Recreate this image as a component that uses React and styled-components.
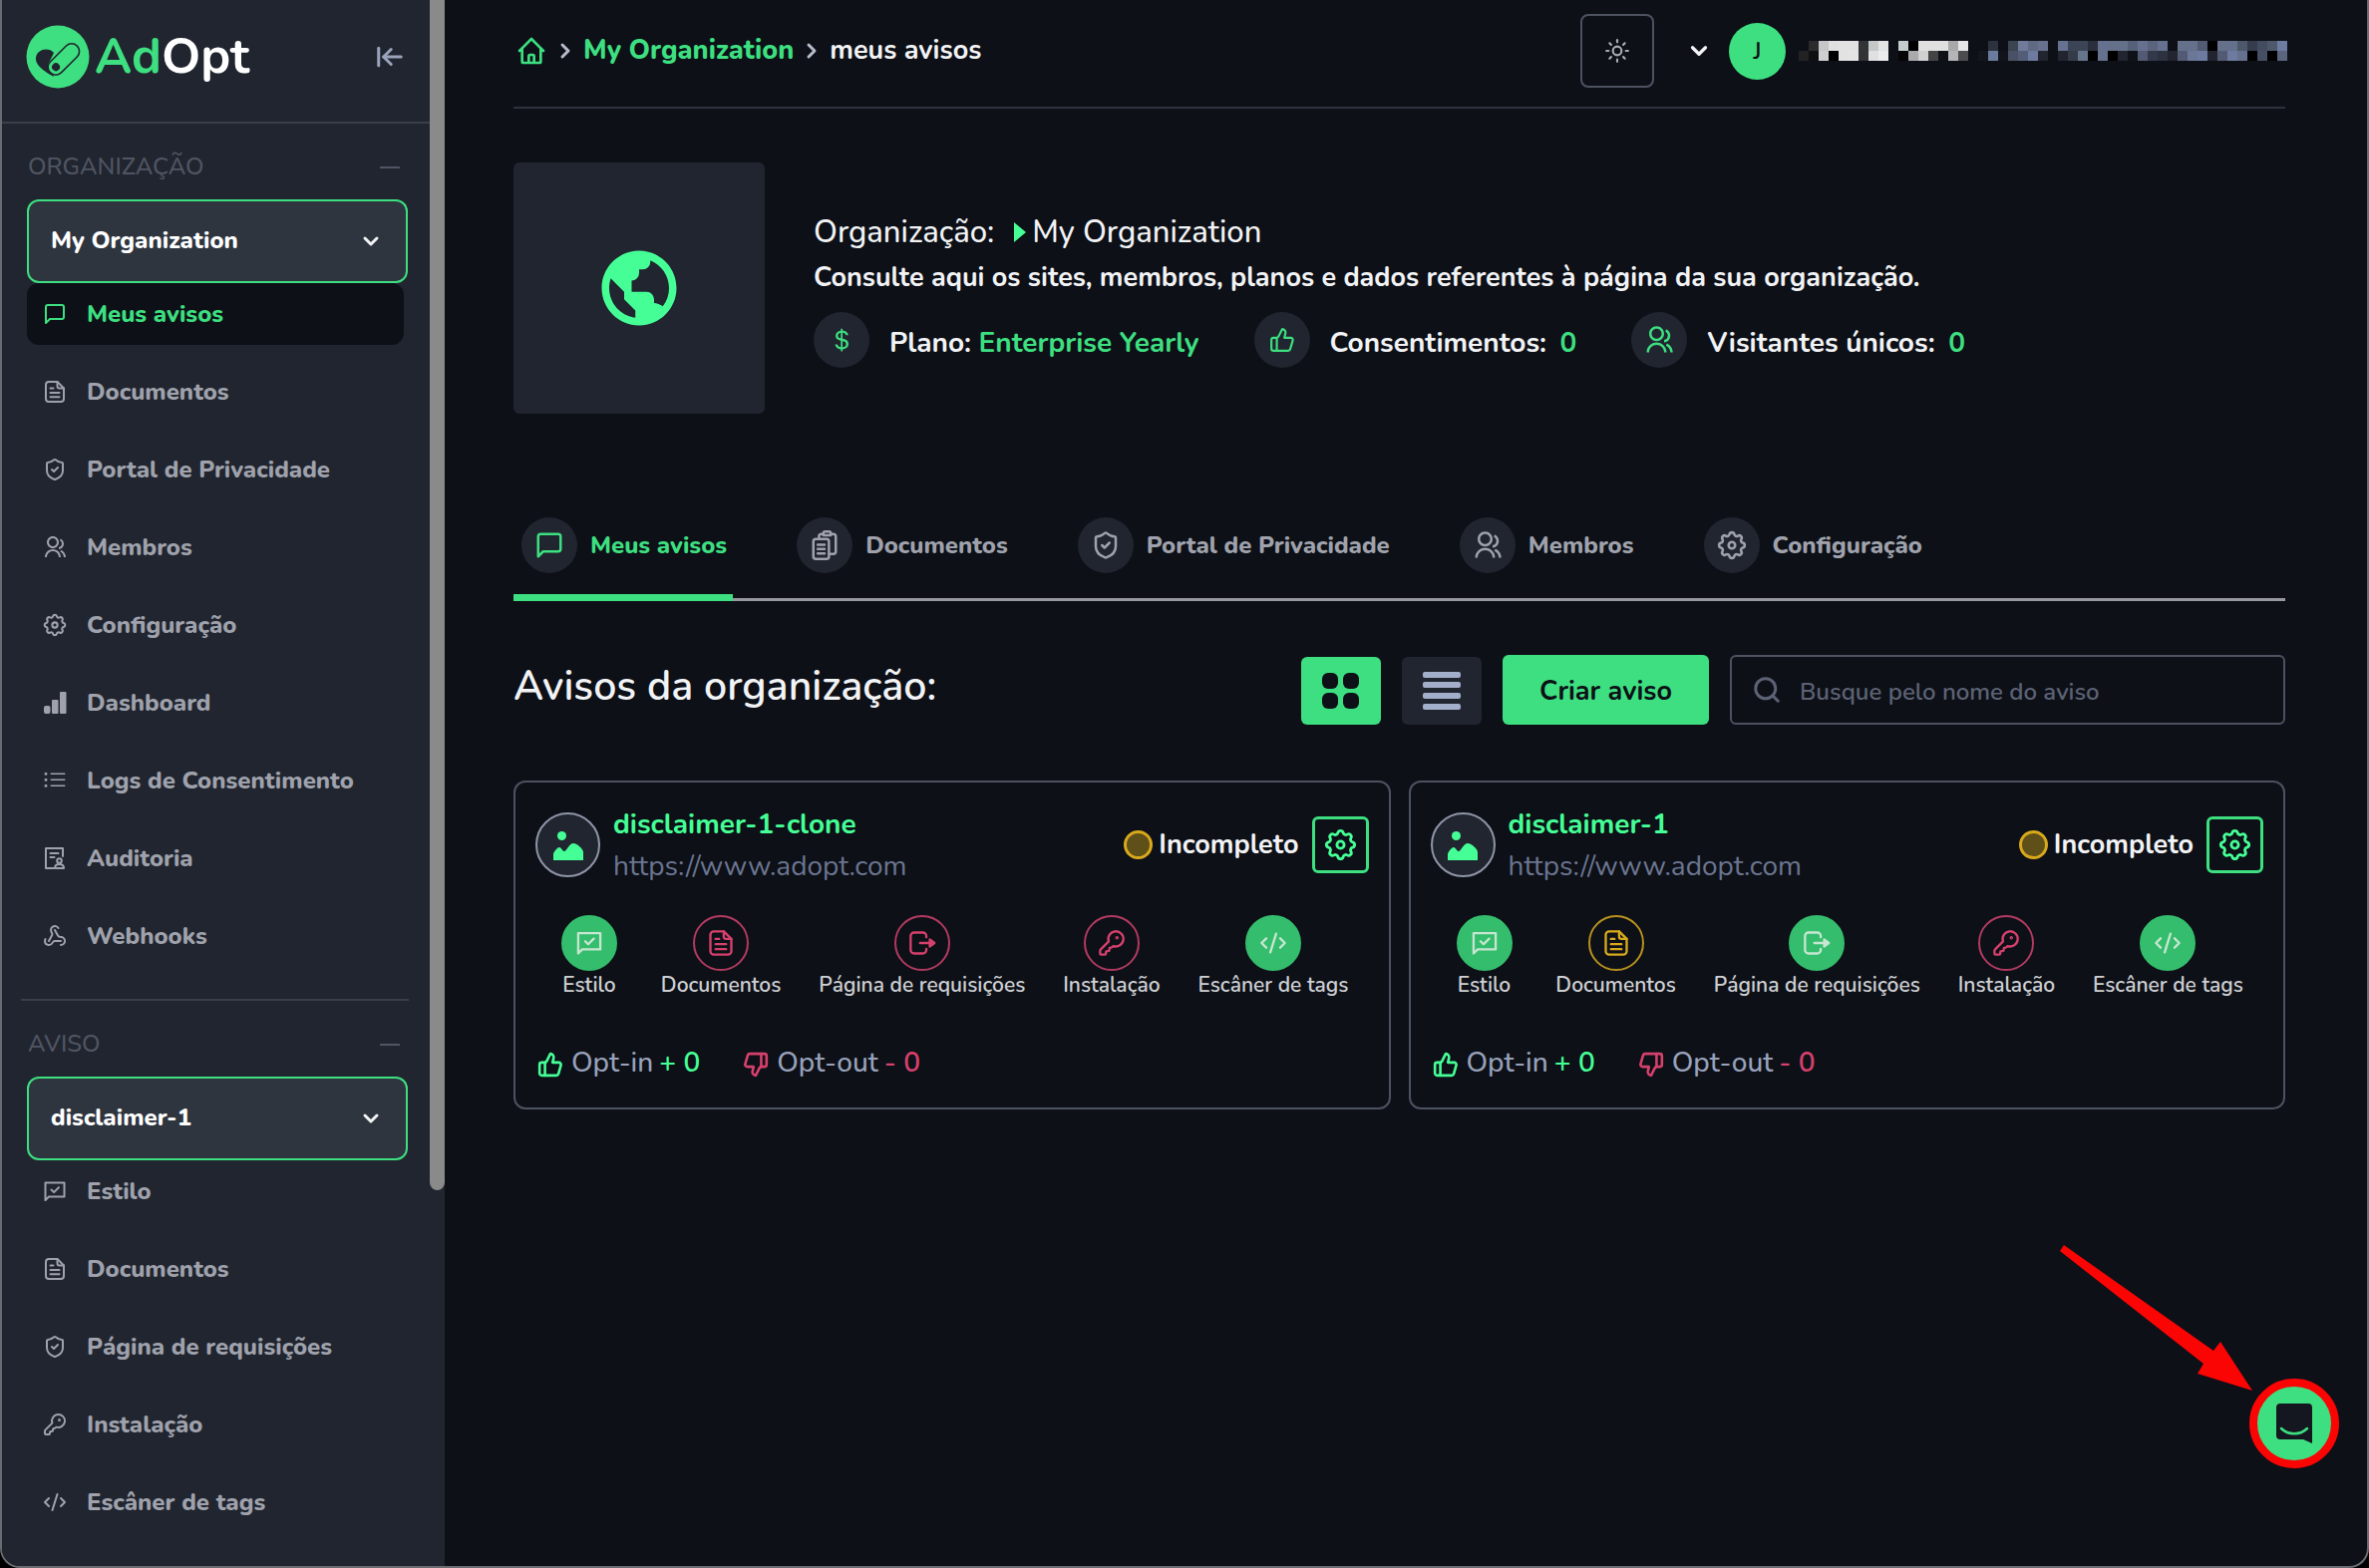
import React from 'react';
import styled, { createGlobalStyle, css } from 'styled-components';
import {
  LuArrowLeftToLine, LuChevronDown, LuChevronRight, LuCodeXml, LuKeyRound, LuSearch,
  LuShieldCheck, LuSun, LuThumbsDown, LuThumbsUp, LuWebhook,
} from 'react-icons/lu';
import { FiMessageSquare } from 'react-icons/fi';
import { HiOutlineHome } from 'react-icons/hi';
import { RiGroupLine } from 'react-icons/ri';
import { BsCurrencyDollar, BsListUl } from 'react-icons/bs';
import { BiWorld } from 'react-icons/bi';

const color = {
  page: '#0d1017',
  panel: '#21252f',
  field: '#2e353f',
  line: '#3a3f4b',
  outline: '#4d5260',
  muted: '#9fa2ac',
  faint: '#4f5563',
  slate: '#6b7590',
  text: '#f2f3f5',
  green: '#3ddf80',
  mint: '#45ff96',
  leaf: '#34bd6d',
  rose: '#d6406c',
  amber: '#d9a91c',
};

const GlobalStyle = createGlobalStyle`
  *, *::before, *::after { box-sizing: border-box; }
  body {
    margin: 0;
    background: #000;
    color: ${color.text};
    font-family: Nunito, "Nunito Sans", "Open Sans", "Noto Sans", sans-serif;
    font-size: 24px;
    line-height: 32px;
  }
  button, select, input { font: inherit; color: inherit; }
  button { cursor: pointer; }
  a { color: inherit; text-decoration: none; }
  h1, h2, h3, p, ul { margin: 0; padding: 0; font-weight: inherit; font-size: inherit; }
  ul { list-style: none; }
  svg { display: block; flex: none; }
`;

/* ---------- icons ---------- */

const Svg = ({ size = 24, width = 2, children, ...rest }) => (
  <svg width={size} height={size} viewBox="0 0 24 24" fill="none" stroke="currentColor"
    strokeWidth={width} strokeLinecap="round" strokeLinejoin="round" aria-hidden="true" {...rest}>
    {children}
  </svg>
);

const MessageCheck = (p) => (
  <Svg {...p}>
    <path d="M2.5 21V3.5h19v14H6z" />
    <path d="M8.5 10.5l2.6 2.6 4.8-4.8" />
  </Svg>
);

const DocumentText = (p) => (
  <Svg {...p}>
    <path d="M14.5 2H6a3 3 0 0 0-3 3v14a3 3 0 0 0 3 3h12a3 3 0 0 0 3-3V8.500z" />
    <path d="M14.500 2v4.500a2 2 0 0 0 2 2H21" />
    <path d="M7.500 8.500h3M7.500 13h9M7.500 17.300h9" />
  </Svg>
);

const ClipboardStack = (p) => (
  <Svg {...p}>
    <path d="M7.500 6V5a2 2 0 0 1 2-2H11M17 3h2a2 2 0 0 1 2 2v12a2 2 0 0 1-2 2h-3" />
    <path d="M11 4V2.500a1.500 1.500 0 0 1 1.500-1.500h3A1.500 1.500 0 0 1 17 2.500V4z" />
    <rect x="3" y="7" width="12.500" height="16" rx="2" />
    <path d="M6.500 11.500h5.500M6.500 15h5.500M6.500 18.500h5.500" />
  </Svg>
);

const Gear = (p) => (
  <Svg {...p} viewBox="1.5 1.5 21 21" strokeWidth="1.8">
    <path d="M10.325 4.317c.426-1.756 2.924-1.756 3.350 0a1.724 1.724 0 0 0 2.573 1.066c1.543-.94 3.310.826 2.370 2.370a1.724 1.724 0 0 0 1.065 2.572c1.756.426 1.756 2.924 0 3.350a1.724 1.724 0 0 0-1.066 2.573c.94 1.543-.826 3.310-2.370 2.370a1.724 1.724 0 0 0-2.572 1.065c-.426 1.756-2.924 1.756-3.350 0a1.724 1.724 0 0 0-2.573-1.066c-1.543.94-3.310-.826-2.370-2.370a1.724 1.724 0 0 0-1.065-2.572c-1.756-.426-1.756-2.924 0-3.350a1.724 1.724 0 0 0 1.066-2.573c-.94-1.543.826-3.310 2.370-2.370 1 .608 2.296.070 2.572-1.065z" />
    <circle cx="12" cy="12" r="2.300" />
  </Svg>
);

const Bars = (p) => (
  <Svg {...p} fill="currentColor" stroke="none">
    <rect x="1" y="15" width="6.500" height="8" rx="2" />
    <rect x="9" y="9" width="6.500" height="14" rx="1" />
    <rect x="17" y="1" width="6.500" height="22" rx="1" />
  </Svg>
);

const Audit = (p) => (
  <Svg {...p}>
    <path d="M20 10V2H3v20h8" />
    <path d="M7.500 7h8M7.500 11h4" />
    <circle cx="16.500" cy="14.500" r="2.300" />
    <path d="M12 22c0-2.600 1.800-4 4.500-4s4.500 1.400 4.500 4z" />
  </Svg>
);

const ExitBox = (p) => (
  <Svg {...p}>
    <path d="M15.500 7V6a3 3 0 0 0-3-3H5a3 3 0 0 0-3 3v12a3 3 0 0 0 3 3h7.500a3 3 0 0 0 3-3v-1" />
    <path d="M10 12h9" />
    <path d="M18.500 9l4 3-4 3z" fill="currentColor" />
  </Svg>
);

const Picture = () => (
  <svg width="30" height="30" viewBox="0 0 30 30" fill={color.mint} aria-hidden="true">
    <circle cx="8.500" cy="5.500" r="4.500" />
    <path d="M0 30v-6c0-2 4-7 6-7s3 4 5 4 5-8 9-8 10 6 10 9v8z" />
  </svg>
);

const TilesIcon = () => (
  <svg width="38" height="38" viewBox="0 0 38 38" fill={color.page} aria-hidden="true">
    <rect x="0" y="1" width="16" height="16" rx="6" />
    <rect x="21" y="1" width="16" height="16" rx="6" />
    <rect x="0" y="21" width="16" height="16" rx="6" />
    <rect x="21" y="21" width="16" height="16" rx="6" />
  </svg>
);

const RowsIcon = () => (
  <svg width="38" height="40" viewBox="0 0 38 40" fill="#a3aeca" aria-hidden="true">
    <rect x="0" y="1" width="38" height="6" rx="2" />
    <rect x="0" y="11" width="38" height="6" rx="2" />
    <rect x="0" y="22" width="38" height="6" rx="2" />
    <rect x="0" y="33" width="38" height="6" rx="2" />
  </svg>
);

const LogoMark = () => (
  <svg width="64" height="64" viewBox="0 0 64 64" aria-hidden="true">
    <circle cx="32" cy="32" r="31.500" fill={color.green} />
    <path d="M28 28c-5-6-17-4-18 5-1 8 11 15 18 19l-6-12z" fill={color.panel} />
    <g transform="rotate(-45 37 35)">
      <rect x="19" y="27.500" width="38" height="15.500" rx="7.700" fill={color.green} stroke={color.panel} strokeWidth="1.600" />
      <circle cx="27" cy="35.200" r="4" fill={color.panel} />
    </g>
  </svg>
);

const ChatBubble = () => (
  <svg width="38" height="42" viewBox="0 0 38 42" aria-hidden="true">
    <path d="M5 1h28a4 4 0 0 1 4 4v36l-9-4H5a4 4 0 0 1-4-4V5a4 4 0 0 1 4-4z" fill="#14171f" />
    <path d="M6 26c7 7 19 7 26 0" fill="none" stroke={color.green} strokeWidth="2.500" strokeLinecap="round" />
  </svg>
);

/* ---------- shell ---------- */

const Frame = styled.div`
  position: relative;
  display: flex;
  min-height: 100vh;
  overflow: hidden;
  background: ${color.page};
  border: 2px solid #6a6c72;
  border-top: 0;
  border-radius: 0 0 20px 20px;
`;

const Sidebar = styled.aside`
  display: flex;
  flex: none;
  width: 444px;
  background: ${color.panel};
`;

const SidebarBody = styled.div`
  flex: 1;
  min-width: 0;
`;

const ScrollThumb = styled.div`
  width: 15px;
  height: 76%;
  background: #8a8a8a;
  border-radius: 0 0 8px 8px;
`;

const Brand = styled.header`
  display: flex;
  align-items: center;
  justify-content: space-between;
  height: 124px;
  padding: 0 25px 8px 24px;
  border-bottom: 2px solid ${color.line};
`;

const BrandLink = styled.a`
  display: flex;
  align-items: center;
  gap: 5px;
  font-size: 50px;
  line-height: 56px;
  font-weight: 700;
  color: #fff;
`;

const BrandAccent = styled.span`
  color: ${color.green};
`;

const PlainButton = styled.button`
  display: flex;
  padding: 0;
  border: 0;
  background: none;
  color: ${(p) => p.$tone || 'inherit'};
`;

const NavSection = styled.section`
  padding: 28px 22px 0 25px;
`;

const SectionHead = styled.div`
  display: flex;
  align-items: center;
  justify-content: space-between;
  height: 28px;
  margin-bottom: 20px;
  padding: 2px 8px 0 1px;
  font-weight: 500;
  color: ${color.faint};
`;

const Dash = styled.span`
  width: 20px;
  height: 2px;
  margin-top: 2px;
  background: ${color.faint};
`;

const Picker = styled.div`
  display: grid;
  align-items: center;
  > * { grid-area: 1 / 1; }
  > svg { justify-self: end; margin-right: 25px; pointer-events: none; }
`;

const Select = styled.select`
  appearance: none;
  width: 100%;
  height: 84px;
  padding: 0 60px 2px 22px;
  border: 2px solid ${color.green};
  border-radius: 12px;
  background: ${color.field};
  color: #fff;
  font-weight: 800;
`;

const NavList = styled.ul`
  display: flex;
  flex-direction: column;
  gap: 16px;
  margin-right: 4px;
`;

const NavLink = styled.a`
  display: flex;
  align-items: center;
  gap: 20px;
  height: 62px;
  padding: 0 16px;
  border-radius: 12px;
  font-weight: 800;
  color: ${color.muted};
  ${(p) => p.$active && css`
    background: ${color.page};
    color: ${color.green};
  `}
`;

const NavDivider = styled.hr`
  height: 2px;
  margin: 32px 21px 0 19px;
  border: 0;
  background: ${color.line};
`;

const Main = styled.main`
  flex: 1;
  min-width: 0;
  padding: 14px 82px 40px 69px;
`;

/* ---------- top bar ---------- */

const TopBar = styled.header`
  display: flex;
  align-items: center;
  justify-content: space-between;
  padding-bottom: 19px;
  border-bottom: 2px solid #2c313c;
`;

const Crumbs = styled.nav`
  display: flex;
  align-items: center;
  gap: 6px;
  padding-left: 2px;
  font-size: 27px;
  font-weight: 700;
`;

const CrumbLink = styled.a`
  color: ${color.green};
  font-weight: 800;
`;

const Account = styled.div`
  display: flex;
  align-items: center;
  margin-right: -2px;
`;

const ThemeButton = styled.button`
  display: grid;
  place-items: center;
  width: 74px;
  height: 74px;
  margin-right: 32px;
  border: 2px solid ${color.outline};
  border-radius: 8px;
  background: none;
  color: #a9abb3;
`;

const Avatar = styled.span`
  display: grid;
  place-items: center;
  width: 57px;
  height: 57px;
  margin: 0 13px 0 17px;
  border-radius: 50%;
  background: ${color.green};
  color: ${color.page};
  font-weight: 600;
`;

/* masked account name: two rows of 10px tiles, "-" is an empty tile */
const MASK = [
  '- 2b2b2d c6c6c8 e0e0e1 e2e2e3 e2e2e3 333436 c4c8c9 e3e5e5 - c4cccd 000 e0e0e1 e0e0e1 e0e0e1 a8a8aa e6e6e7 - - 2c333f - 3b4552 6f7b99 606b83 667290 - 667290 3b4555 3b4555 2a2f3b 65718e 65718a 65718a 566079 65718e 5a657d 65718e - 65718a 65718a 535b74 000 65718a 65718a 4d586b 353c4c 434c5f 4d586b 6d7ba0',
  '222224 0f0f12 cfcfd0 000 e2e2e3 e4e4e5 333335 e0e0e1 ececee - 050505 aaaaac d0d0d1 444446 0f1116 b5b5b7 4c4c4e - 14161d 6b7b9e 11151b 4a5065 535d78 6d7ba0 22252f - 22252f 353b49 66758c 000 65718e 000 22252f 0f1218 535b74 33384a 2d3240 22252f 535b74 6b7796 6d7ba0 22252f 535b74 6d7ba0 65718e 000 454e63 000 5a657d',
].map((row) => row.split(' '));

const MaskedName = () => (
  <svg width="490" height="20" viewBox="0 0 490 20" shapeRendering="crispEdges" role="img" aria-label="Conta">
    {MASK.map((row, y) => row.map((c, x) => (c === '-' ? null
      : <rect key={`${x}-${y}`} x={x * 10} y={y * 10} width="10" height="10" fill={`#${c}`} />)))}
  </svg>
);

/* ---------- organization summary ---------- */

const Summary = styled.section`
  display: flex;
  align-items: center;
  gap: 49px;
  margin-top: 54px;
`;

const OrgImage = styled.div`
  display: grid;
  place-items: center;
  flex: none;
  width: 252px;
  height: 252px;
  border-radius: 6px;
  background: ${color.panel};
  color: ${color.mint};
`;

const OrgTitle = styled.h1`
  display: flex;
  align-items: center;
  gap: 6px;
  padding-top: 2px;
  font-size: 31px;
  line-height: 44px;
  font-weight: 500;
`;

const Marker = styled.span`
  margin-left: 14px;
  border-left: 12px solid ${color.mint};
  border-top: 10px solid transparent;
  border-bottom: 10px solid transparent;
`;

const OrgText = styled.p`
  font-size: 27px;
  line-height: 48px;
  font-weight: 700;
`;

const Facts = styled.ul`
  display: flex;
  gap: 55px;
  margin-top: 10px;
  font-size: 28px;
  font-weight: 700;
`;

const Fact = styled.li`
  display: flex;
  align-items: center;
  gap: 20px;
`;

const FactText = styled.span`
  padding-top: 6px;
`;

const Value = styled.span`
  margin-left: ${(p) => (p.$apart ? 6 : 0)}px;
  color: ${color.green};
`;

const Disc = styled.span`
  display: grid;
  place-items: center;
  flex: none;
  width: 56px;
  height: 56px;
  border-radius: 50%;
  background: ${color.panel};
  color: ${(p) => p.$tone || 'inherit'};
`;

/* ---------- tabs ---------- */

const Tabs = styled.nav`
  display: flex;
  gap: 56px;
  margin-top: 104px;
  box-shadow: inset 0 -3px 0 #97999f;
`;

const Tab = styled.a`
  display: flex;
  align-items: center;
  gap: 13px;
  padding: 0 6px 21px 8px;
  border-bottom: 7px solid ${(p) => (p.$active ? color.green : 'transparent')};
  color: ${(p) => (p.$active ? color.green : color.muted)};
  font-weight: 800;
`;

/* ---------- toolbar ---------- */

const Toolbar = styled.div`
  display: flex;
  align-items: flex-end;
  gap: 21px;
  margin-top: 54px;
`;

const Heading = styled.h2`
  flex: 1;
  align-self: center;
  padding-bottom: 6px;
  font-size: 41px;
  line-height: 56px;
  font-weight: 600;
`;

const ViewButton = styled.button`
  display: grid;
  place-items: center;
  width: 80px;
  height: 68px;
  border: 0;
  border-radius: 6px;
  background: ${(p) => (p.$active ? color.green : color.panel)};
`;

const CreateButton = styled.button`
  height: 70px;
  padding: 3px 37px 0;
  border: 0;
  border-radius: 6px;
  background: ${color.green};
  color: ${color.page};
  font-size: 27px;
  font-weight: 700;
`;

const Search = styled.label`
  display: flex;
  align-items: center;
  gap: 18px;
  width: 557px;
  height: 70px;
  padding: 0 20px;
  border: 2px solid ${color.outline};
  border-radius: 6px;
  color: #5c6274;
`;

const SearchInput = styled.input`
  flex: 1;
  min-width: 0;
  padding: 3px 0 0;
  border: 0;
  outline: 0;
  background: none;
  color: ${color.text};
  font-weight: 600;
  &::placeholder { color: #5c6274; opacity: 1; }
`;

/* ---------- notice cards ---------- */

const Cards = styled.div`
  display: grid;
  grid-template-columns: 1fr 1fr;
  gap: 18px;
  margin-top: 56px;
`;

const Card = styled.article`
  padding: 30px 20px 29px;
  border: 2px solid ${color.outline};
  border-radius: 12px;
`;

const CardHead = styled.header`
  display: flex;
  align-items: center;
  gap: 13px;
`;

const Thumb = styled.span`
  display: grid;
  place-items: center;
  width: 65px;
  height: 65px;
  border: 2px solid #8f96a8;
  border-radius: 50%;
  background: ${color.panel};
`;

const Names = styled.div`
  flex: 1;
  font-size: 28px;
  line-height: 42px;
  margin: -12px 0;
  color: ${color.slate};
`;

const NoticeName = styled.h3`
  color: ${color.mint};
  font-weight: 700;
`;

const Status = styled.span`
  display: flex;
  align-items: center;
  gap: 6px;
  font-size: 27px;
  font-weight: 700;
  &::before {
    content: '';
    width: 29px;
    height: 29px;
    border: 3px solid ${color.amber};
    border-radius: 50%;
    background: #5f5019;
  }
`;

const GearButton = styled.button`
  display: grid;
  place-items: center;
  width: 57px;
  height: 57px;
  padding: 0;
  border: 3px solid ${color.green};
  border-radius: 6px;
  background: none;
  color: ${color.mint};
`;

const Steps = styled.ul`
  display: flex;
  justify-content: space-between;
  margin-top: 38px;
  padding: 0 20px;
`;

const Step = styled.li`
  display: flex;
  flex-direction: column;
  align-items: center;
  min-width: 68px;
  font-size: 21px;
  line-height: 28px;
  font-weight: 600;
  color: #cdcfd3;
`;

const tones = {
  done: css`background: ${color.leaf}; border-color: ${color.leaf}; color: #c5e6d0;`,
  missing: css`border-color: #b23a60; color: ${color.rose};`,
  pending: css`border-color: #b8901d; color: ${color.amber};`,
};

const StepDisc = styled.span`
  display: grid;
  place-items: center;
  width: 56px;
  height: 56px;
  border: 2px solid;
  border-radius: 50%;
  ${(p) => tones[p.$state]}
`;

const Counts = styled.div`
  display: flex;
  gap: 41px;
  margin-top: 48px;
  font-size: 28px;
  font-weight: 500;
  color: #98a2bb;
`;

const Count = styled.p`
  display: flex;
  align-items: center;
  gap: 6px;
  > svg, > strong { color: ${(p) => p.$tone}; font-weight: 600; }
  > svg { margin: 4px 2px 0; }
`;

/* ---------- floating help ---------- */

const Help = styled.div`
  position: absolute;
  right: 28px;
  bottom: 98px;
  display: flex;
`;

const HelpButton = styled.button`
  display: grid;
  place-items: center;
  width: 90px;
  height: 90px;
  padding: 0;
  border: 8px solid #fb0404;
  border-radius: 50%;
  background: ${color.green};
`;

const Arrow = styled.svg`
  position: absolute;
  right: 86px;
  bottom: 77px;
`;

/* ---------- content ---------- */

const orgLinks = [
  ['Meus avisos', FiMessageSquare], ['Documentos', DocumentText], ['Portal de Privacidade', LuShieldCheck],
  ['Membros', RiGroupLine], ['Configuração', Gear], ['Dashboard', Bars],
  ['Logs de Consentimento', BsListUl], ['Auditoria', Audit], ['Webhooks', LuWebhook],
];

const noticeLinks = [
  ['Estilo', MessageCheck], ['Documentos', DocumentText], ['Página de requisições', LuShieldCheck],
  ['Instalação', LuKeyRound], ['Escâner de tags', LuCodeXml],
];

const tabs = [
  ['Meus avisos', FiMessageSquare], ['Documentos', ClipboardStack], ['Portal de Privacidade', LuShieldCheck],
  ['Membros', RiGroupLine], ['Configuração', Gear],
];

const stepKinds = [
  ['Estilo', MessageCheck], ['Documentos', DocumentText], ['Página de requisições', ExitBox],
  ['Instalação', LuKeyRound], ['Escâner de tags', LuCodeXml],
];

const notices = [
  { name: 'disclaimer-1-clone', states: ['done', 'missing', 'missing', 'missing', 'done'] },
  { name: 'disclaimer-1', states: ['done', 'pending', 'done', 'missing', 'done'] },
];

function NavGroup({ id, title, option, links, active }) {
  return (
    <NavSection>
      <SectionHead>
        <label htmlFor={id}>{title}</label>
        <Dash />
      </SectionHead>
      <Picker>
        <Select id={id} defaultValue={option}>
          <option>{option}</option>
        </Select>
        <LuChevronDown size={24} strokeWidth={3} />
      </Picker>
      <NavList>
        {links.map(([label, Icon]) => (
          <li key={label}>
            <NavLink href="#" $active={label === active}>
              <Icon size={24} />
              {label}
            </NavLink>
          </li>
        ))}
      </NavList>
    </NavSection>
  );
}

function NoticeCard({ name, states }) {
  return (
    <Card>
      <CardHead>
        <Thumb><Picture /></Thumb>
        <Names>
          <NoticeName>{name}</NoticeName>
          <a href="#">https://www.adopt.com</a>
        </Names>
        <Status>Incompleto</Status>
        <GearButton type="button" aria-label="Configurar"><Gear size={33} /></GearButton>
      </CardHead>
      <Steps>
        {stepKinds.map(([label, Icon], i) => (
          <Step key={label}>
            <StepDisc $state={states[i]}><Icon size={28} /></StepDisc>
            {label}
          </Step>
        ))}
      </Steps>
      <Counts>
        <Count $tone={color.mint}><LuThumbsUp size={26} strokeWidth={2.4} /> Opt-in <strong>+ 0</strong></Count>
        <Count $tone={color.rose}><LuThumbsDown size={26} strokeWidth={2.4} /> Opt-out <strong>- 0</strong></Count>
      </Counts>
    </Card>
  );
}

export default function App() {
  return (
    <>
      <GlobalStyle />
      <Frame>
        <Sidebar>
          <SidebarBody>
            <Brand>
              <BrandLink href="#">
                <LogoMark />
                <span><BrandAccent>Ad</BrandAccent>Opt</span>
              </BrandLink>
              <PlainButton type="button" aria-label="Recolher menu" $tone="#9aa3bb">
                <LuArrowLeftToLine size={30} strokeWidth={2.4} />
              </PlainButton>
            </Brand>
            <NavGroup id="org" title="ORGANIZAÇÃO" option="My Organization" links={orgLinks} active="Meus avisos" />
            <NavDivider />
            <NavGroup id="notice" title="AVISO" option="disclaimer-1" links={noticeLinks} />
          </SidebarBody>
          <ScrollThumb />
        </Sidebar>

        <Main>
          <TopBar>
            <Crumbs>
              <CrumbLink href="#" aria-label="Início"><HiOutlineHome size={32} /></CrumbLink>
              <LuChevronRight size={24} strokeWidth={3} color="#b6bccb" />
              <CrumbLink href="#">My Organization</CrumbLink>
              <LuChevronRight size={24} strokeWidth={3} color="#b6bccb" />
              <span>meus avisos</span>
            </Crumbs>
            <Account>
              <ThemeButton type="button" aria-label="Tema"><LuSun size={26} /></ThemeButton>
              <PlainButton type="button" aria-label="Abrir conta"><LuChevronDown size={26} strokeWidth={3} /></PlainButton>
              <Avatar>J</Avatar>
              <MaskedName />
            </Account>
          </TopBar>

          <Summary>
            <OrgImage><BiWorld size={90} /></OrgImage>
            <div>
              <OrgTitle>Organização: <Marker />My Organization</OrgTitle>
              <OrgText>Consulte aqui os sites, membros, planos e dados referentes à página da sua organização.</OrgText>
              <Facts>
                <Fact>
                  <Disc $tone={color.green}><BsCurrencyDollar size={26} /></Disc>
                  <FactText>Plano: <Value>Enterprise Yearly</Value></FactText>
                </Fact>
                <Fact>
                  <Disc $tone={color.green}><LuThumbsUp size={26} /></Disc>
                  <FactText>Consentimentos: <Value $apart>0</Value></FactText>
                </Fact>
                <Fact>
                  <Disc $tone={color.green}><RiGroupLine size={30} /></Disc>
                  <FactText>Visitantes únicos: <Value $apart>0</Value></FactText>
                </Fact>
              </Facts>
            </div>
          </Summary>

          <Tabs>
            {tabs.map(([label, Icon], i) => (
              <Tab key={label} href="#" $active={i === 0}>
                <Disc><Icon size={30} /></Disc>
                {label}
              </Tab>
            ))}
          </Tabs>

          <Toolbar>
            <Heading>Avisos da organização:</Heading>
            <ViewButton type="button" aria-label="Grade" $active><TilesIcon /></ViewButton>
            <ViewButton type="button" aria-label="Lista"><RowsIcon /></ViewButton>
            <CreateButton type="button">Criar aviso</CreateButton>
            <Search>
              <LuSearch size={30} strokeWidth={2.4} />
              <SearchInput type="text" aria-label="Buscar aviso" placeholder="Busque pelo nome do aviso" />
            </Search>
          </Toolbar>

          <Cards>
            {notices.map((n) => <NoticeCard key={n.name} {...n} />)}
          </Cards>
        </Main>

        <Help>
          <Arrow width="194" height="147" viewBox="0 0 194 147" fill="#fb0404" aria-hidden="true">
            <path d="M4 0L154 106L161 97L193 146L138 129L144 119L0 6z" />
          </Arrow>
          <HelpButton type="button" aria-label="Ajuda"><ChatBubble /></HelpButton>
        </Help>
      </Frame>
    </>
  );
}
